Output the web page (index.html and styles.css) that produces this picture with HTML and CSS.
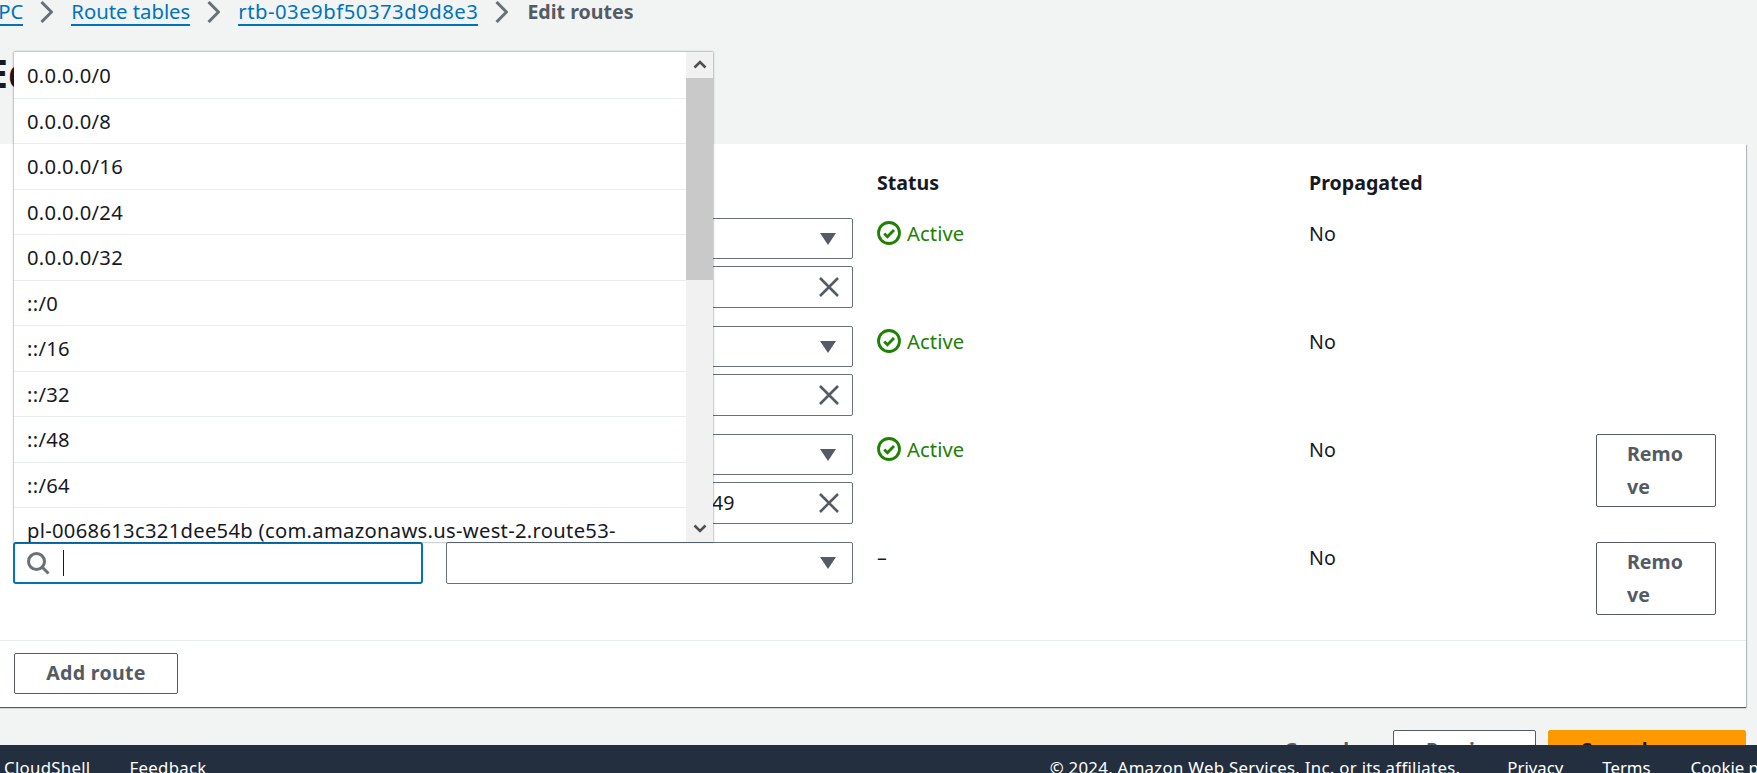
FILE: index.html
```html
<!DOCTYPE html>
<html>
  <head>
    <meta charset="UTF-8" />
    <title>Edit routes</title>
    <link rel="stylesheet" href="styles.css">
  </head>
  <body>
    <div class="app">
      <main class="content">
        <nav class="crumbs">
          <a href="#" class="crumb-vpc">VPC</a>
          <svg class="crumb-sep" viewBox="0 0 13 22"><path d="M1.500 1l10 10-10 10"/></svg>
          <a href="#">Route tables</a>
          <svg class="crumb-sep" viewBox="0 0 13 22"><path d="M1.500 1l10 10-10 10"/></svg>
          <a href="#" class="crumb-id">rtb-03e9bf50373d9d8e3</a>
          <svg class="crumb-sep" viewBox="0 0 13 22"><path d="M1.500 1l10 10-10 10"/></svg>
          <span class="crumb-current">Edit routes</span>
        </nav>
        <h1 class="title">Edit routes</h1>

        <section class="card">
          <div class="grid grid-head">
            <div></div>
            <div></div>
            <div class="th">Status</div>
            <div class="th">Propagated</div>
            <div></div>
          </div>

          <div class="grid route">
            <div class="field"></div>
            <div class="stack">
              <div class="field">
                <svg class="caret" viewBox="0 0 16 12"><path d="M0 0h16L8 12z"/></svg>
              </div>
              <div class="field">
                <svg class="clear" viewBox="0 0 20 20"><path d="M1 1l18 18M19 1L1 19"/></svg>
              </div>
            </div>
            <div class="cell status">
              <svg class="ok" viewBox="0 0 24 24"><circle cx="12" cy="12" r="10.500"/><path d="M7.200 12.600l3.200 3.200L17 9"/></svg>
              Active
            </div>
            <div class="cell">No</div>
            <div></div>
          </div>

          <div class="grid route">
            <div class="field"></div>
            <div class="stack">
              <div class="field">
                <svg class="caret" viewBox="0 0 16 12"><path d="M0 0h16L8 12z"/></svg>
              </div>
              <div class="field">
                <svg class="clear" viewBox="0 0 20 20"><path d="M1 1l18 18M19 1L1 19"/></svg>
              </div>
            </div>
            <div class="cell status">
              <svg class="ok" viewBox="0 0 24 24"><circle cx="12" cy="12" r="10.500"/><path d="M7.200 12.600l3.200 3.200L17 9"/></svg>
              Active
            </div>
            <div class="cell">No</div>
            <div></div>
          </div>

          <div class="grid route">
            <div class="field"></div>
            <div class="stack">
              <div class="field">
                <svg class="caret" viewBox="0 0 16 12"><path d="M0 0h16L8 12z"/></svg>
              </div>
              <div class="field field-value">
                <span>49</span>
                <svg class="clear" viewBox="0 0 20 20"><path d="M1 1l18 18M19 1L1 19"/></svg>
              </div>
            </div>
            <div class="cell status">
              <svg class="ok" viewBox="0 0 24 24"><circle cx="12" cy="12" r="10.500"/><path d="M7.200 12.600l3.200 3.200L17 9"/></svg>
              Active
            </div>
            <div class="cell">No</div>
            <button class="btn btn-remove">Remove</button>
          </div>

          <div class="grid route route-new">
            <div class="field field-focus">
              <svg class="search" viewBox="0 0 24 24"><circle cx="10.500" cy="10.500" r="8"/><path d="M16 16l6.500 6.500"/></svg>
              <span class="cursor"></span>
            </div>
            <div class="field">
              <svg class="caret" viewBox="0 0 16 12"><path d="M0 0h16L8 12z"/></svg>
            </div>
            <div class="cell">–</div>
            <div class="cell">No</div>
            <button class="btn btn-remove">Remove</button>
          </div>

          <div class="card-foot">
            <button class="btn btn-add">Add route</button>
          </div>
        </section>

        <div class="actions">
          <button class="btn btn-link">Cancel</button>
          <button class="btn btn-preview">Preview</button>
          <button class="btn btn-save">Save changes</button>
        </div>
      </main>

      <footer class="footer">
        <a class="foot-shell">CloudShell</a>
        <a class="foot-feedback">Feedback</a>
        <span class="foot-copy">© 2024, Amazon Web Services, Inc. or its affiliates.</span>
        <a class="foot-privacy">Privacy</a>
        <a class="foot-terms">Terms</a>
        <a>Cookie preferences</a>
      </footer>
    </div>

    <!-- autosuggest menu lies over the first column -->
    <div class="menu">
      <ul class="menu-list">
        <li>0.0.0.0/0</li>
        <li>0.0.0.0/8</li>
        <li>0.0.0.0/16</li>
        <li>0.0.0.0/24</li>
        <li>0.0.0.0/32</li>
        <li>::/0</li>
        <li>::/16</li>
        <li>::/32</li>
        <li>::/48</li>
        <li>::/64</li>
        <li>pl-0068613c321dee54b (com.amazonaws.us-west-2.route53-</li>
      </ul>
      <div class="scrollbar">
        <svg class="scroll-arrow" viewBox="0 0 14 10"><path d="M1.500 8.500L7 3l5.500 5.500"/></svg>
        <div class="scroll-thumb"></div>
        <svg class="scroll-arrow scroll-down" viewBox="0 0 14 10"><path d="M1.500 1.500L7 7l5.500-5.500"/></svg>
      </div>
    </div>
  </body>
</html>
```

FILE: styles.css
```css
* {
   box-sizing: border-box;
}
html, body {
   margin: 0;
   height: 100%;
   overflow: hidden;
}
body {
   position: relative;
   font-family: "Noto Sans", "Open Sans", Arial, sans-serif;
   font-size: 19.6px;
   line-height: 32px;
   color: #16191f;
   background-color: #f2f3f3;
}
a {
   color: #0073bb;
}
button {
   font: inherit;
}

.app {
   display: flex;
   flex-direction: column;
   height: 773px;
   width: 1771px;
   margin-left: -14px;
}
.content {
   flex: 1;
   min-height: 0;
   overflow: hidden;
   padding-right: 11px;
}

/* breadcrumbs */
.crumbs {
   display: flex;
   align-items: flex-start;
   height: 26px;
   line-height: 23px;
   white-space: nowrap;
}
.crumbs a {
   height: 26px;
   font-size: 20.3px;
   text-decoration: none;
   border-bottom: 2px solid #0073bb;
}
.crumbs .crumb-id {
   letter-spacing: .5px;
}
.crumb-sep {
   flex: none;
   width: 13px;
   height: 22px;
   margin: 1px 18px 0 17px;
}
.crumb-sep path {
   fill: none;
   stroke: #687078;
   stroke-width: 3;
}
.crumb-current {
   margin-left: 1px;
   color: #545b64;
   font-weight: 700;
}

.title {
   margin: 22px 0 46px;
   font-size: 39.2px;
   line-height: 50px;
   font-weight: 700;
}

/* card */
.card {
   background: #fff;
   box-shadow: 0 1px 1px 0 rgba(0, 28, 36, .5), 1px 1px 1px 0 rgba(0, 28, 36, .2), -1px 1px 1px 0 rgba(0, 28, 36, .2);
}
.grid {
   display: grid;
   grid-template-columns: 408px 407px 408px 263px 120px;
   column-gap: 24px;
   padding-left: 28px;
}
.grid-head {
   height: 74px;
   padding-top: 23px;
}
.th {
   font-weight: 700;
}
.route {
   margin-bottom: 18px;
   align-items: start;
}
.route-new {
   margin-bottom: 0;
   padding-bottom: 25px;
}
.stack {
   display: flex;
   flex-direction: column;
   gap: 7px;
}
.field {
   display: flex;
   align-items: center;
   justify-content: flex-end;
   height: 41px;
   padding-right: 13px;
   background: #fff;
   border: 1px solid #687078;
   border-radius: 2px;
}
.field + .field {
   height: 42px;
}
.field-value {
   justify-content: space-between;
   padding-left: 265px;
}
.field-focus {
   justify-content: flex-start;
   height: 42px;
   margin: 0 -1px;
   padding: 0 0 0 11px;
   border: 2px solid #0073bb;
   border-radius: 3px;
}
.caret {
   width: 16px;
   height: 12px;
   margin-right: 3px;
   fill: #545b64;
}
.clear {
   width: 20px;
   height: 20px;
   fill: none;
   stroke: #545b64;
   stroke-width: 2.600;
}
.cell {
   display: flex;
   align-items: center;
   height: 32px;
}
.status {
   padding-bottom: 2px;
   color: #1d8102;
   font-size: 20.200px;
   letter-spacing: .1px;
}
.ok {
   width: 24px;
   height: 24px;
   margin-right: 6px;
   fill: none;
   stroke: #1d8102;
   stroke-width: 2.800;
}
.search {
   width: 24px;
   height: 24px;
   fill: none;
   stroke: #687078;
   stroke-width: 3;
}
.cursor {
   width: 1px;
   height: 26px;
   margin-left: 13px;
   background: #16191f;
}

/* buttons */
.btn {
   display: block;
   padding: 0;
   background: #fff;
   color: #545b64;
   font-weight: 700;
   border: 1px solid #545b64;
   border-radius: 2px;
}
.btn-remove {
   width: 120px;
   height: 73px;
   padding: 0 30px 2px;
   line-height: 33px;
   text-align: left;
   word-break: break-all;
}
.card-foot {
   border-top: 1px solid #eaeded;
   padding: 12px 0 13px 28px;
}
.btn-add {
   width: 164px;
   height: 41px;
   padding-bottom: 2px;
   line-height: 36px;
   letter-spacing: .3px;
}

.actions {
   display: flex;
   justify-content: flex-end;
   align-items: flex-start;
   margin-top: 23px;
}
.actions .btn {
   height: 42px;
   padding-bottom: 2px;
   line-height: 34px;
}
.btn-link {
   margin-right: 44px;
   background: none;
   border: 0;
}
.btn-preview {
   width: 143px;
   margin-right: 12px;
}
.btn-save {
   width: 198px;
   background: #ff9900;
   border-color: #ff9900;
   color: #16191f;
}

/* footer */
.footer {
   display: flex;
   flex: none;
   height: 28px;
   padding: 8px 0 0 18px;
   overflow: hidden;
   background: #232f3e;
   color: #fff;
   font-size: 16.800px;
   line-height: 30px;
   white-space: nowrap;
}
.foot-shell {
   margin-right: 39px;
   letter-spacing: .3px;
}
.foot-feedback {
   letter-spacing: .3px;
}
.foot-copy {
   margin-left: 843px;
   margin-right: 47px;
   letter-spacing: .3px;
}
.foot-privacy {
   margin-right: 39px;
}
.foot-terms {
   margin-right: 40px;
}
.footer a {
   color: #fff;
}

/* suggestion menu */
.menu {
   position: absolute;
   left: 14px;
   top: 52px;
   display: flex;
   width: 699px;
   height: 490px;
   overflow: hidden;
   background: #fff;
   box-shadow: 0 0 2px 0 rgba(0, 28, 36, .6);
}
.menu-list {
   flex: 1;
   margin: 0;
   padding: 1px 0 0;
   list-style: none;
   font-size: 20.200px;
   letter-spacing: .3px;
}
.menu-list li {
   height: 45.500px;
   padding-left: 13px;
   line-height: 44px;
   white-space: nowrap;
   border-bottom: 1px solid #eaeded;
}
.scrollbar {
   display: flex;
   flex-direction: column;
   flex: none;
   width: 27px;
   height: 100%;
   background: #f1f1f1;
}
.scroll-arrow {
   flex: none;
   width: 14px;
   height: 10px;
   margin: 7px auto 9px;
   fill: none;
   stroke: #505050;
   stroke-width: 2.600;
}
.scroll-thumb {
   height: 202px;
   background: #c9c9c9;
}
.scroll-down {
   margin: auto auto 8px;
}
```
